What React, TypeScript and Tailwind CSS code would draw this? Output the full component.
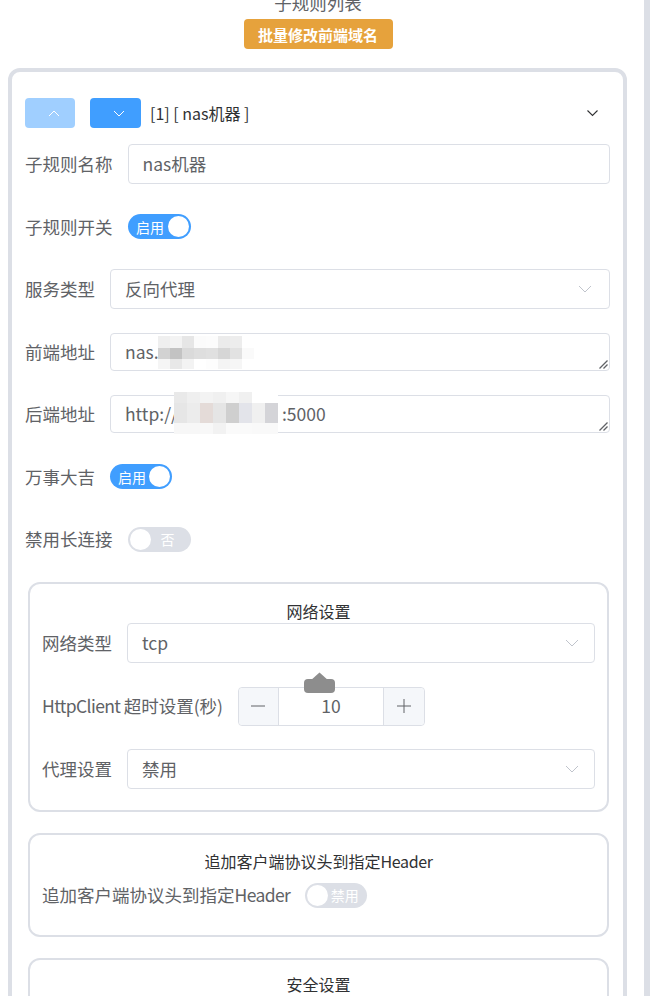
import React from "react";

const LABEL = "text-[17.5px] leading-none text-[#606266] whitespace-nowrap";

function SelChevron() {
  return (
    <svg width="14" height="8" viewBox="0 0 14 8" fill="none">
      <path d="M1 1 L7 7 L13 1" stroke="#c0c4cc" strokeWidth="1" />
    </svg>
  );
}

function Row({ label, children }: { label: React.ReactNode; children: React.ReactNode }) {
  return (
    <div className="flex h-[40px] shrink-0 items-center gap-[15px]">
      <span className={LABEL}>{label}</span>
      {children}
    </div>
  );
}

function Input({ value }: { value: string }) {
  return (
    <div className="flex h-[40px] flex-1 items-center rounded-[4px] border border-[#dcdfe6] px-[14px] text-[17.5px] leading-none text-[#606266]">
      {value}
    </div>
  );
}

function Select({ value, pr }: { value: string; pr: string }) {
  return (
    <div className={`flex h-[40px] flex-1 items-center justify-between rounded-[4px] border border-[#dcdfe6] pl-[14px] ${pr} text-[17.5px] leading-none text-[#606266]`}>
      <span>{value}</span>
      <SelChevron />
    </div>
  );
}

function Resize() {
  return (
    <svg className="absolute bottom-[1px] right-[1px]" width="10" height="10" viewBox="0 0 10 10" fill="none">
      <path d="M9.5 1.5 L1.5 9.5" stroke="#606266" strokeWidth="1.2" />
      <path d="M9.5 5.5 L5.5 9.5" stroke="#606266" strokeWidth="1.2" />
    </svg>
  );
}

function Mosaic({ rows, heights, cellW }: { rows: string[][]; heights: string[]; cellW: string }) {
  return (
    <div className="flex flex-col">
      {rows.map((r, i) => (
        <div key={i} className={`flex ${heights[i]}`}>
          {r.map((c, j) => (
            <div key={j} className={`${cellW} h-full ${c}`} />
          ))}
        </div>
      ))}
    </div>
  );
}

const m1 = [
  ["bg-[#efefef]", "bg-[#f3f3f3]", "bg-[#e6e6e6]", "bg-[#fbfbfb]", "bg-[#fcfcfc]", "bg-[#ebebeb]", "bg-[#ededed]", "bg-[#ffffff]"],
  ["bg-[#d2d2d2]", "bg-[#c3c3c3]", "bg-[#dadada]", "bg-[#dedede]", "bg-[#e0e0e0]", "bg-[#d6d6d6]", "bg-[#e2e2e2]", "bg-[#fafafa]"],
  ["bg-[#f5f5f5]", "bg-[#e8e8e8]", "bg-[#f3f3f3]", "bg-[#ffffff]", "bg-[#fdfdfd]", "bg-[#f4f4f4]", "bg-[#f6f6f6]", "bg-[#ffffff]"],
];
const m2 = [
  ["bg-[#e9e9e9]", "bg-[#efefef]", "bg-[#f3f3f3]", "bg-[#f0f0f0]", "bg-[#f6f6f6]", "bg-[#f0f0f0]", "bg-[#ffffff]", "bg-[#ffffff]"],
  ["bg-[#e6e6e6]", "bg-[#ececec]", "bg-[#e4dbd8]", "bg-[#e5e5e5]", "bg-[#cfcfcf]", "bg-[#e3e4ea]", "bg-[#f0f0f0]", "bg-[#d4d4d8]"],
  ["bg-[#f7f7f7]", "bg-[#f7f7f7]", "bg-[#f8f8f8]", "bg-[#f2f2f2]", "bg-[#fafafa]", "bg-[#fafafa]", "bg-[#f9f9f9]", "bg-[#f9f9f9]"],
];

function Toggle({ on, text, w }: { on: boolean; text: string; w: string }) {
  if (on) {
    return (
      <div className={`flex h-[25px] ${w} items-center rounded-full bg-[#409eff] pr-[2px]`}>
        <span className="flex-1 pl-[5px] text-center text-[14px] leading-none text-white">{text}</span>
        <div className="h-[21px] w-[21px] rounded-full bg-white" />
      </div>
    );
  }
  return (
    <div className={`flex h-[25px] ${w} items-center rounded-full bg-[#dcdfe6] pl-[2px]`}>
      <div className="h-[21px] w-[21px] rounded-full bg-white" />
      <span className="flex-1 pr-[6px] text-center text-[14px] leading-none text-white">{text}</span>
    </div>
  );
}

function Box({ title, children, cls }: { title: React.ReactNode; children?: React.ReactNode; cls: string }) {
  return (
    <div className={`ml-[3px] mr-[1px] shrink-0 rounded-[12px] border-2 border-[#dcdfe6] px-[12px] ${cls}`}>
      <div className="text-center text-[16px] leading-[20px] text-[#303133]">{title}</div>
      {children}
    </div>
  );
}

export default function App() {
  return (
    <div className="flex h-[996px] w-[657px] items-start overflow-hidden bg-white font-['Noto_Sans_CJK_SC','Noto_Sans',sans-serif]">
      <div className="flex w-[636px] shrink-0 flex-col items-center">
        <div className="mt-[-6px] h-[18px] shrink-0 text-[17.5px] leading-[18px] text-[#606266]">子规则列表</div>
        <button className="mt-[7px] flex h-[30px] w-[149px] shrink-0 items-center justify-center rounded-[4px] bg-[#e6a23c] text-[15px] font-bold leading-none text-white">
          批量修改前端域名
        </button>

        <div className="mt-[19px] ml-[8px] w-[619px] shrink-0 self-start rounded-[12px] border-4 border-[#dcdfe6] px-[13px] pt-[26px] pb-[40px]">
          {/* header */}
          <div className="flex h-[30px] items-center">
            <button className="flex h-[30px] w-[50px] items-center justify-center rounded-[4px] bg-[#a0cfff] pl-[7px]">
              <svg width="12" height="7" viewBox="0 0 12 7" fill="none">
                <path d="M1 6 L6 1 L11 6" stroke="white" strokeWidth="1" />
              </svg>
            </button>
            <button className="ml-[15px] flex h-[30px] w-[51px] items-center justify-center rounded-[4px] bg-[#409eff] pl-[7px]">
              <svg width="12" height="7" viewBox="0 0 12 7" fill="none">
                <path d="M1 1 L6 6 L11 1" stroke="white" strokeWidth="1" />
              </svg>
            </button>
            <span className="ml-[9px] text-[16px] leading-none text-[#303133]">[1] [ nas机器 ]</span>
            <svg className="ml-auto mr-[12px]" width="11" height="7" viewBox="0 0 11 7" fill="none">
              <path d="M0.5 0.5 L5.5 5.5 L10.5 0.5" stroke="#303133" strokeWidth="1.1" />
            </svg>
          </div>

          <div className="mt-[16px] flex flex-col gap-[22.5px]">
            <Row label="子规则名称">
              <Input value="nas机器" />
            </Row>
            <Row label="子规则开关">
              <Toggle on text="启用" w="w-[63px]" />
            </Row>
            <Row label="服务类型">
              <Select value="反向代理" pr="pr-[17px]" />
            </Row>
            <Row label="前端地址">
              <div className="relative flex h-[38px] flex-1 items-center rounded-[4px] border border-[#dcdfe6] px-[14px] text-[17.5px] leading-none text-[#606266]">
                <span>nas.1</span>
                <div className="absolute left-[47px] top-[2px]">
                  <Mosaic rows={m1} heights={["h-[12px]", "h-[11px]", "h-[10px]"]} cellW="w-[12px]" />
                </div>
                <Resize />
              </div>
            </Row>
            <Row label="后端地址">
              <div className="relative flex h-[38px] flex-1 items-center rounded-[4px] border border-[#dcdfe6] px-[14px] text-[17.5px] leading-none text-[#606266]">
                <span>http://</span>
                <span className="inline-block w-[104px]" />
                <span>:5000</span>
                <div className="absolute left-[63px] top-[-4px]">
                  <Mosaic rows={m2} heights={["h-[11px]", "h-[20px]", "h-[11px]"]} cellW="w-[13px]" />
                </div>
                <Resize />
              </div>
            </Row>
            <Row label="万事大吉">
              <Toggle on text="启用" w="w-[62px]" />
            </Row>
            <Row label="禁用长连接">
              <Toggle on={false} text="否" w="w-[63px]" />
            </Row>
          </div>

          <div className="mt-[23px] flex flex-col gap-[21px]">
            <Box title="网络设置" cls="pt-[17px] pb-[21px]">
              <div className="mt-[2px] flex flex-col gap-[23px]">
                <Row label="网络类型">
                  <Select value="tcp" pr="pr-[15px]" />
                </Row>
                <Row
                  label={
                    <>
                      <span className="tracking-[-0.6px]">HttpClient </span>超时设置(秒)
                    </>
                  }
                >
                  <div className="relative flex h-[39px] w-[187px] rounded-[4px] border border-[#dcdfe6]">
                    <div className="flex w-[40px] items-center justify-center rounded-l-[4px] border-r border-[#dcdfe6] bg-[#f5f7fa]">
                      <svg width="14" height="2" viewBox="0 0 14 2"><path d="M0 1 H14" stroke="#606266" strokeWidth="1" /></svg>
                    </div>
                    <div className="flex flex-1 items-center justify-center text-[17.5px] leading-none text-[#606266]">10</div>
                    <div className="flex w-[41px] items-center justify-center rounded-r-[4px] border-l border-[#dcdfe6] bg-[#f5f7fa]">
                      <svg width="14" height="14" viewBox="0 0 14 14"><path d="M0 7 H14 M7 0 V14" stroke="#606266" strokeWidth="1" /></svg>
                    </div>
                    <svg className="absolute left-[65px] top-[-16px]" width="31" height="21" viewBox="0 0 31 21">
                      <path d="M6 9 L15.5 0.5 L25 9 Z" fill="#8d8d8d" />
                      <rect x="0" y="7" width="31" height="14" rx="4" fill="#8d8d8d" />
                    </svg>
                  </div>
                </Row>
                <Row label="代理设置">
                  <Select value="禁用" pr="pr-[15px]" />
                </Row>
              </div>
            </Box>

            <Box
              title={
                <>
                  追加客户端协议头到指定<span className="tracking-[-0.4px]">Header</span>
                </>
              }
              cls="pt-[16px] pb-[20px]"
            >
              <div className="mt-[4px] flex flex-col">
                <Row
                  label={
                    <>
                      追加客户端协议头到指定<span className="tracking-[-0.6px]">Header</span>
                    </>
                  }
                >
                  <Toggle on={false} text="禁用" w="w-[62px]" />
                </Row>
              </div>
            </Box>

            <Box title="安全设置" cls="pt-[14px] pb-[80px]" />
          </div>
        </div>
      </div>
      <div className="ml-[8px] h-[996px] w-[6px] shrink-0 bg-[#dcdfe6]" />
    </div>
  );
}
